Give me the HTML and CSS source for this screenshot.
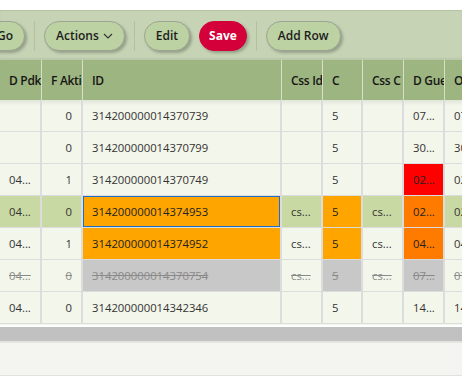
FILE: index.html
```html
<!DOCTYPE html>
<html>
<head>
  <link rel="stylesheet" href="styles.css">
</head>
<body>
  <div class="toolbar">
    <button class="tb-btn go-btn">Go</button>
    <span class="tb-sep"></span>
    <button class="tb-btn">Actions
      <svg class="chevron" width="10" height="6" viewBox="0 0 10 6"><path d="M1 1 L5 5 L9 1" fill="none" stroke="#333" stroke-width="1.1"/></svg>
    </button>
    <span class="tb-sep"></span>
    <button class="tb-btn">Edit</button>
    <button class="tb-btn save-btn">Save</button>
    <span class="tb-sep"></span>
    <button class="tb-btn">Add Row</button>
  </div>

  <div class="grid-wrap">
    <table class="grid">
      <colgroup>
        <col style="width: 42px">
        <col style="width: 41px">
        <col style="width: 199px">
        <col style="width: 41px">
        <col style="width: 40px">
        <col style="width: 41px">
        <col style="width: 41px">
        <col style="width: 41px">
      </colgroup>
      <thead>
        <tr>
          <th>D Pdk</th>
          <th>F Akti</th>
          <th>ID</th>
          <th>Css Id</th>
          <th>C</th>
          <th>Css C</th>
          <th>D Gue</th>
          <th>O</th>
        </tr>
      </thead>
      <tbody>
        <tr class="first">
          <td></td>
          <td class="num">0</td>
          <td>314200000014370739</td>
          <td></td>
          <td>5</td>
          <td></td>
          <td>07...</td>
          <td>07</td>
        </tr>
        <tr>
          <td></td>
          <td class="num">0</td>
          <td>314200000014370799</td>
          <td></td>
          <td>5</td>
          <td></td>
          <td>30...</td>
          <td>30</td>
        </tr>
        <tr>
          <td>04...</td>
          <td class="num">1</td>
          <td>314200000014370749</td>
          <td></td>
          <td>5</td>
          <td></td>
          <td class="red">02...</td>
          <td>02</td>
        </tr>
        <tr class="selected">
          <td>04...</td>
          <td class="num">0</td>
          <td class="changed focus">314200000014374953</td>
          <td>cs...</td>
          <td class="changed">5</td>
          <td>cs...</td>
          <td class="dark-orange">02...</td>
          <td>02</td>
        </tr>
        <tr>
          <td>04...</td>
          <td class="num">1</td>
          <td class="changed">314200000014374952</td>
          <td>cs...</td>
          <td class="changed">5</td>
          <td>cs...</td>
          <td class="dark-orange">04...</td>
          <td>04</td>
        </tr>
        <tr class="deleted">
          <td>04...</td>
          <td class="num">0</td>
          <td class="grey">314200000014370754</td>
          <td>cs...</td>
          <td class="grey">5</td>
          <td>cs...</td>
          <td class="grey">07...</td>
          <td>07</td>
        </tr>
        <tr>
          <td>04...</td>
          <td class="num">0</td>
          <td>314200000014342346</td>
          <td></td>
          <td>5</td>
          <td></td>
          <td>14...</td>
          <td>14</td>
        </tr>
      </tbody>
    </table>
  </div>

  <div class="hscroll"></div>
  <div class="footer"></div>
</body>
</html>
```

FILE: styles.css
```css
body {
  margin: 0;
  background-color: #ffffff;
  font-family: "Open Sans", "Noto Sans", sans-serif;
  color: #333333;
  overflow: hidden;
}

.toolbar {
  margin-top: 10px;
  height: 49px;
  border-top: 1px solid #b6c3a6;
  background-color: #c6d4b5;
  display: flex;
  align-items: center;
  gap: 9px;
  overflow: hidden;
  box-shadow: inset 0 -2px 2px rgba(0, 0, 0, 0.06);
}

.tb-btn {
  height: 30px;
  padding: 0 11px;
  border: 1px solid #9ea493;
  border-radius: 15px;
  background-color: #bcd2a3;
  color: #1c1c1c;
  font-family: "Open Sans", sans-serif;
  font-size: 12px;
  font-weight: 600;
  box-shadow: 2px 2px 3px rgba(0, 0, 0, 0.25);
  display: flex;
  align-items: center;
  gap: 4px;
  flex-shrink: 0;
  cursor: pointer;
}

.go-btn {
  margin-left: -15px;
}

.save-btn {
  padding: 0 9px;
  background-color: #d4003a;
  border-color: #d4003a;
  color: #ffffff;
  font-weight: 700;
}

.chevron {
  margin-top: 1px;
}

.tb-sep {
  width: 1px;
  height: 30px;
  background-color: #b3c1a2;
  flex-shrink: 0;
}

.grid-wrap {
  height: 265px;
  overflow: hidden;
  background-color: #f3f6ea;
}

.grid {
  table-layout: fixed;
  border-collapse: separate;
  border-spacing: 0;
  width: 486px;
  font-size: 11.3px;
}

.grid th {
  height: 40px;
  padding: 0 0 0 9px;
  background-color: #9db580;
  border-right: 1px solid #d5e0c6;
  color: #161616;
  font-size: 12px;
  font-weight: 600;
  letter-spacing: -0.3px;
  text-align: left;
  white-space: nowrap;
  overflow: hidden;
  box-sizing: border-box;
}

.grid td {
  height: 32px;
  padding: 0 9px;
  background-color: #f3f6ea;
  border-right: 2px solid #dcdcdc;
  border-bottom: 1px solid #dcdcdc;
  white-space: nowrap;
  overflow: hidden;
  box-sizing: border-box;
}

.grid tr.first td {
  background-image: linear-gradient(rgba(0, 0, 0, 0.07), rgba(0, 0, 0, 0) 6px);
}

.grid td.num {
  text-align: right;
}

.grid tr.selected td {
  background-color: #c9d9a3;
}

.grid tr td.changed {
  background-color: #ffa500;
  color: #222222;
}

.grid tr td.focus {
  box-shadow: inset 0 0 0 1px #1f6fc8;
}

.grid tr td.dark-orange {
  background-color: #ff7b00;
  color: #222222;
}

.grid td.red {
  background-color: #ff0000;
  color: #222222;
}

.grid tr.deleted td {
  color: #8a8a8a;
  text-decoration: line-through;
}

.grid tr.deleted td.grey {
  background-color: #c8c8c8;
}

.hscroll {
  height: 14px;
  margin-top: 2px;
  background-color: #c1c1c1;
  border-bottom: 2px solid #e2e4de;
}

.footer {
  height: 32px;
  background-color: #f4f5f0;
  border-bottom: 1px solid #e0e2dc;
}
```
